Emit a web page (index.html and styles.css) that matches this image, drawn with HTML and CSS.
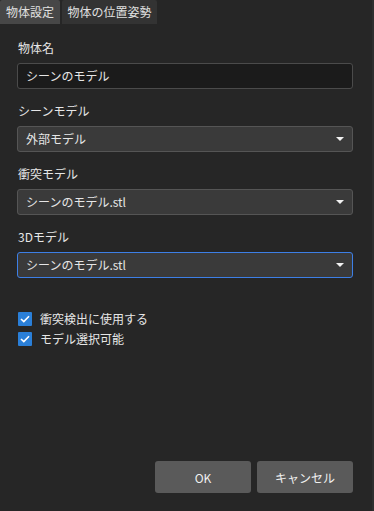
FILE: index.html
```html
<!DOCTYPE html>
<html lang="ja">
<head>
    <meta charset="UTF-8">
    <title>物体設定</title>
    <link rel="stylesheet" href="styles.css">
</head>
<body>
    <div class="tabs">
        <div class="tab active">物体設定</div>
        <div class="tab">物体の位置姿勢</div>
    </div>
    <div class="panel">
        <div class="field">
            <div class="label">物体名</div>
            <div class="input">シーンのモデル</div>
        </div>
        <div class="field">
            <div class="label">シーンモデル</div>
            <div class="select">外部モデル<span class="arrow"></span></div>
        </div>
        <div class="field">
            <div class="label">衝突モデル</div>
            <div class="select">シーンのモデル.stl<span class="arrow"></span></div>
        </div>
        <div class="field">
            <div class="label">3Dモデル</div>
            <div class="select focus">シーンのモデル.stl<span class="arrow"></span></div>
        </div>
        <div class="checks">
            <label class="check"><span class="box"><svg width="10" height="8" viewBox="0 0 10 8"><path d="M1 4 L3.8 6.6 L9 1.2" fill="none" stroke="#fff" stroke-width="1.6"/></svg></span>衝突検出に使用する</label>
            <label class="check"><span class="box"><svg width="10" height="8" viewBox="0 0 10 8"><path d="M1 4 L3.8 6.6 L9 1.2" fill="none" stroke="#fff" stroke-width="1.6"/></svg></span>モデル選択可能</label>
        </div>
        <div class="btns">
            <button>OK</button>
            <button>キャンセル</button>
        </div>
    </div>
</body>
</html>
```

FILE: styles.css
```css
*{
    margin: 0;
    padding: 0;
    box-sizing: border-box;
}

html,body{
    height: 100%;
}

body{
    background: #262626;
    color: #e6e6e6;
    font-family: "Noto Sans CJK JP", "Noto Sans", sans-serif;
    font-size: 12px;
    border-right: 2px solid #2e2e2e;
    display: flex;
    flex-direction: column;
}

.tabs{
    display: flex;
    gap: 2px;
    height: 24px;
}
.tab{
    width: 95px;
    text-align: center;
    line-height: 23px;
    font-size: 12px;
    background: #333;
    color: #e0e0e0;
    border-radius: 2px 2px 0 0;
}
.tab.active{
    background: #474747;
    width: 60px;
}

.panel{
    flex: 1;
    padding: 15px 19px 18px 17px;
    display: flex;
    flex-direction: column;
}

.field{
    display: flex;
    flex-direction: column;
    margin-bottom: 13px;
}
.label{
    line-height: 17px;
    margin-bottom: 7px;
    padding-left: 1px;
}

.input,.select{
    height: 26px;
    border-radius: 3px;
    line-height: 24px;
    padding-left: 8px;
    position: relative;
}
.input{
    background: #1b1b1b;
    border: 1px solid #4b4b4b;
}
.select{
    background: #3a3a3a;
    border: 1px solid #555;
}
.select.focus{
    border-color: #3d7fe6;
}
.arrow{
    position: absolute;
    right: 8px;
    top: 10px;
    border-left: 4px solid transparent;
    border-right: 4px solid transparent;
    border-top: 4px solid #f2f2f2;
}

.checks{
    margin-top: 21px;
    display: flex;
    flex-direction: column;
    gap: 6px;
}
.check{
    display: flex;
    align-items: center;
    gap: 8px;
    line-height: 14px;
    padding-left: 1px;
}
.box{
    width: 14px;
    height: 14px;
    background: #2a7fd8;
    border-radius: 1px;
    display: flex;
    align-items: center;
    justify-content: center;
}

.btns{
    margin-top: auto;
    display: flex;
    justify-content: flex-end;
    gap: 6px;
}
.btns button{
    width: 96px;
    height: 32px;
    background: #5a5a5a;
    color: #f0f0f0;
    border: none;
    border-radius: 3px;
    font-family: inherit;
    font-size: 12px;
}
```
